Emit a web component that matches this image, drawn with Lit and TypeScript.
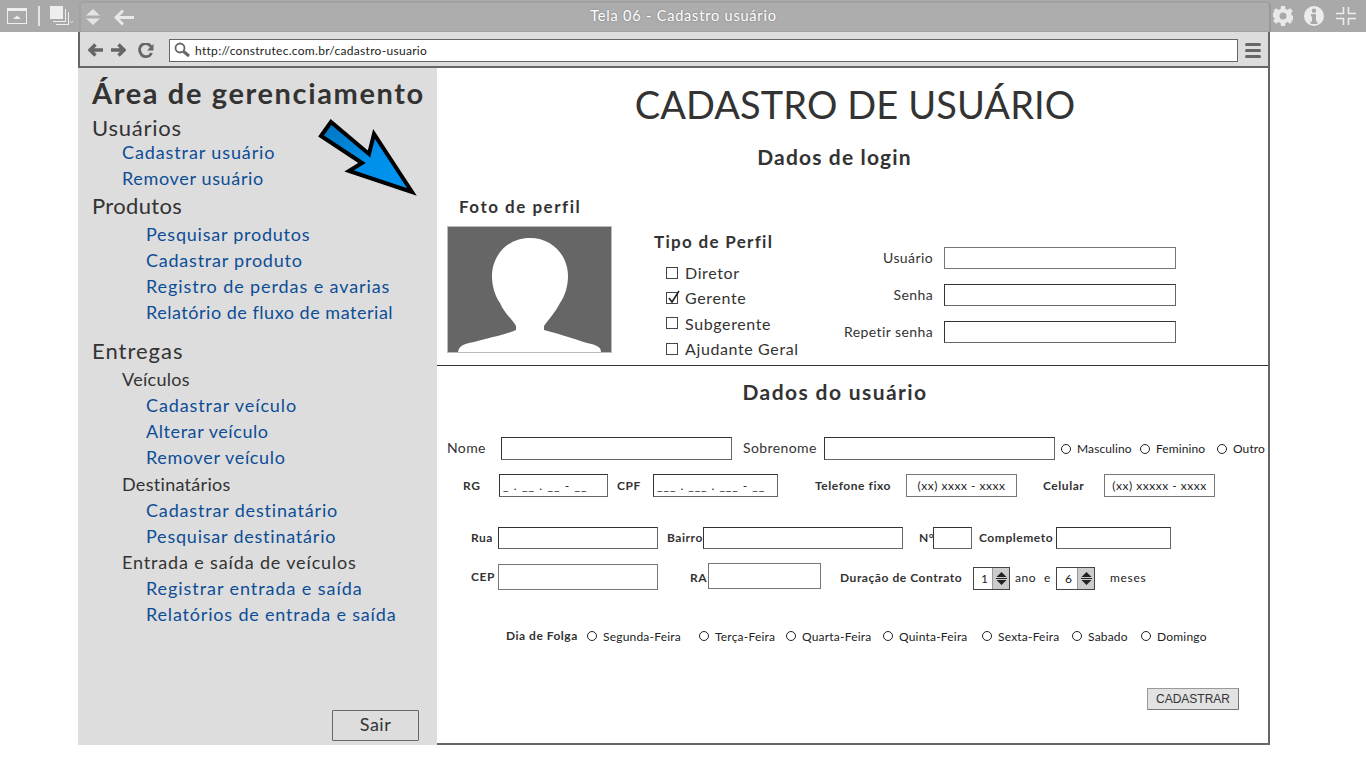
import { LitElement, html, css } from "lit";
import { customElement } from "lit/decorators.js";

type Nav = { t: string; k: string; y: number; ls: number };
const NAV: Nav[] = [
  { t: "Usuários", k: "group", y: 128, ls: 0.75 },
  { t: "Cadastrar usuário", k: "link l1", y: 152, ls: 0.89 },
  { t: "Remover usuário", k: "link l1", y: 178, ls: 0.65 },
  { t: "Produtos", k: "group", y: 206, ls: 0.35 },
  { t: "Pesquisar produtos", k: "link l2", y: 234, ls: 0.76 },
  { t: "Cadastrar produto", k: "link l2", y: 260, ls: 0.77 },
  { t: "Registro de perdas e avarias", k: "link l2", y: 286, ls: 0.9 },
  { t: "Relatório de fluxo de material", k: "link l2", y: 312, ls: 0.52 },
  { t: "Entregas", k: "group", y: 351, ls: 1.0 },
  { t: "Veículos", k: "sub", y: 379, ls: 0.3 },
  { t: "Cadastrar veículo", k: "link l2", y: 405, ls: 0.89 },
  { t: "Alterar veículo", k: "link l2", y: 431, ls: 0.58 },
  { t: "Remover veículo", k: "link l2", y: 457, ls: 0.65 },
  { t: "Destinatários", k: "sub", y: 484, ls: 0.3 },
  { t: "Cadastrar destinatário", k: "link l2", y: 510, ls: 0.83 },
  { t: "Pesquisar destinatário", k: "link l2", y: 536, ls: 0.78 },
  { t: "Entrada e saída de veículos", k: "sub", y: 562, ls: 0.85 },
  { t: "Registrar entrada e saída", k: "link l2", y: 588, ls: 0.93 },
  { t: "Relatórios de entrada e saída", k: "link l2", y: 614, ls: 0.82 },
];

const DAYS = ["Segunda-Feira", "Terça-Feira", "Quarta-Feira", "Quinta-Feira", "Sexta-Feira", "Sabado", "Domingo"];

@customElement("app-root")
export class AppRoot extends LitElement {
  static styles = css`
    :host { display: block; width: 1366px; height: 768px; background: #fff; overflow: hidden; font-family: "Lato", "Open Sans", sans-serif; color: #333; position: relative; }
    * { box-sizing: border-box; }
    svg { display: block; flex: none; }
    .top { display: flex; height: 32px; background: #a9a9a9; }
    .side { width: 79px; display: flex; align-items: center; flex: none; }
    .s1 { margin-left: 7px; }
    .sep { width: 2px; height: 20px; background: #e4e4e4; margin: 0 10px 0 11px; }
    .title { width: 1192px; flex: none; height: 31px; margin-top: 1px; background: #adadad; border: 2px solid #a2a2a2; border-bottom-width: 1px; border-right-color: #999; border-radius: 5px 5px 0 0; display: flex; align-items: center; position: relative; }
    .bk { margin-left: 13px; }
    .ud { margin-left: 4px; }
    .tt { position: absolute; left: 17px; right: 0; top: 4px; text-align: center; color: #fff; font-size: 14.5px; letter-spacing: 0.8px; text-shadow: 0 0 2px #777; }
    .right { display: flex; align-items: center; gap: 11px; margin-left: 2px; }
    .shrink { margin-left: 1px; }
    .browser { width: 1192px; margin-left: 78px; border-left: 2px solid #666; border-right: 2px solid #666; }
    .chrome { height: 36px; background: #ddd; border-bottom: 2px solid #666; display: flex; align-items: center; padding-left: 8px; padding-top: 2px; }
    .nav2 { margin-left: 8px; }
    .nav3 { margin-left: 12px; }
    .addr { width: 1069px; height: 23px; margin-left: 15px; background: #fff; border: 1px solid #666; display: flex; align-items: center; padding-left: 4px; font-size: 12px; letter-spacing: 0.3px; color: #222; }
    .addr span { margin-left: 5px; }
    .burger { margin-left: 7px; }
    .page { margin-left: -2px; margin-right: -2px; height: 677px; display: flex; }
    .menu { width: 359px; flex: none; background: #ddd; position: relative; padding-left: 14px; display: flex; flex-direction: column; }
    .menu h1 { margin: 12px 0 0; height: 28px; line-height: 26px; font-size: 29px; font-weight: 700; letter-spacing: 1.62px; white-space: nowrap; }
    .row { height: 26px; line-height: 26px; white-space: nowrap; }
    .group { font-size: 22px; }
    .sub { font-size: 18px; padding-left: 30px; }
    .link { font-size: 18px; color: #0d4d96; }
    .l1 { padding-left: 30px; }
    .l2 { padding-left: 54px; }
    .arrow { position: absolute; left: 239px; top: 48px; overflow: visible; }
    .sair { position: absolute; left: 254px; top: 642px; width: 87px; height: 31px; padding-bottom: 3px; background: #ddd; border: 1px solid #666; display: flex; align-items: center; justify-content: center; font-size: 18px; letter-spacing: 0.5px; border-radius: 1px; }
    .main { width: 833px; flex: none; height: 677px; border-right: 2px solid #666; border-bottom: 2px solid #666; border-radius: 0 0 3px 0; }
    .login { height: 298px; border-bottom: 1px solid #333; display: flow-root; }
    .h0 { margin: 13px 0 0; height: 46px; line-height: 46px; padding-left: 5px; text-align: center; font-size: 38px; font-weight: 400; letter-spacing: 0.1px; }
    .h2 { margin: 0; height: 26px; line-height: 26px; text-align: center; font-size: 21px; font-weight: 700; letter-spacing: 1.15px; padding-right: 36px; }
    .login .h2 { margin-top: 18px; margin-bottom: 0; position: relative; top: -1px; }
    .lg { display: grid; grid-template-columns: 207px 203px 1fr; padding-left: 10px; }
    .cap { font-size: 17px; font-weight: 700; letter-spacing: 1.3px; line-height: 24px; height: 24px; white-space: nowrap; }
    .foto .cap { margin-top: 24px; padding-left: 12px; letter-spacing: 1.5px; }
    .avatar { margin-top: 7px; }
    .tipo .cap { margin-top: 59px; }
    .checks { margin-top: 6px; display: flex; flex-direction: column; padding-left: 12px; }
    .check { height: 25.3px; display: flex; align-items: center; gap: 7px; font-size: 16px; letter-spacing: 0.62px; }
    .box { width: 12px; height: 12px; border: 1px solid #444; background: #fff; flex: none; position: relative; }
    .box svg { position: absolute; left: 0; top: -3px; }
    .creds { margin-top: 76px; display: grid; grid-template-columns: 76px 232px; row-gap: 15px; column-gap: 11px; align-items: center; align-content: start; }
    .creds label { text-align: right; font-size: 14px; letter-spacing: 0.4px; white-space: nowrap; justify-self: end; padding-bottom: 2px; }
    .inp { height: 100%; min-height: 22px; background: #fff; border: 1px solid #333; border-right-color: #666; border-bottom-color: #666; display: flex; align-items: center; font-size: 12px; letter-spacing: 0.5px; color: #222; white-space: nowrap; }
    .inp.c { justify-content: center; }
    .inp.lite { border-color: #777; }
    .mask { padding-left: 3px; }
    .mrg { letter-spacing: 1.1px; }
    .mcpf { letter-spacing: 0.95px; }
    .user { padding-left: 10px; }
    .user .h2 { margin-top: 13px; padding-right: 45px; letter-spacing: 1.4px; }
    .fr { display: grid; align-items: center; height: 23px; white-space: nowrap; }
    .fr label { font-size: 12px; font-weight: 700; letter-spacing: 0.55px; padding-bottom: 1px; }
    .fr label.plain { font-size: 14px; font-weight: 400; letter-spacing: 0.4px; padding-bottom: 2px; }
    .r1 { margin-top: 32px; grid-template-columns: 54px 231px 92px 231px 85px 77px 1fr; }
    .r1 label.sobre { padding-left: 11px; }
    .r2 { margin-top: 14px; grid-template-columns: 52px 109px 45px 125px 128px 111px 87px 111px; }
    .r3 { margin-top: 30px; height: 22px; grid-template-columns: 51px 160px 45px 200px 30px 39px 84px 115px; }
    .r4 { margin-top: 15px; height: 22px; grid-template-columns: 51px 160px 50px 113px 152px 37px 46px 39px 1fr; }
    .r4 .up { margin-top: -2px; }
    .r4 .low { margin-top: 2px; }
    .p16 { padding-left: 16px; } .p9 { padding-left: 9px; } .p37 { padding-left: 37px; } .p26 { padding-left: 26px; }
    .p24 { padding-left: 24px; } .p7 { padding-left: 7px; } .p32 { padding-left: 32px; } .p19 { padding-left: 19px; }
    .radio { display: flex; align-items: center; gap: 6px; font-size: 12px; letter-spacing: 0.1px; white-space: nowrap; color: #222; }
    .radio i { width: 10px; height: 10px; border: 1px solid #222; border-radius: 50%; flex: none; }
    .first { padding-left: 6px; }
    .plainT { font-size: 12px; letter-spacing: 0.5px; color: #222; display: flex; margin-top: 1px; }
    .ano { padding-left: 5px; gap: 8px; }
    .mes { padding-left: 15px; letter-spacing: .7px; }
    .step { height: 23px; margin-top: 3px; align-self: start; display: flex; background: #fff; border: 1px solid #444; font-size: 12px; color: #222; }
    .step b { flex: 1; padding-left: 3px; font-weight: 400; display: flex; align-items: center; justify-content: center; }
    .step span { width: 17px; background: #ccc; display: flex; align-items: center; justify-content: center; border-left: 1px solid #999; }
    .days { margin-top: 40px; height: 20px; display: grid; grid-template-columns: 140px 112px 87px 97px 99px 90px 69px 1fr; align-items: center; }
    .days label { padding-left: 59px; font-size: 12px; font-weight: 700; letter-spacing: 0.5px; white-space: nowrap; margin-right: -40px; padding-bottom: 1px; }
    .days .radio { gap: 6px; letter-spacing: .2px; }
    .cad { margin: 42px 0 0 700px; width: 92px; height: 22px; background: #e2e2e2; border: 1px solid #999; border-bottom-color: #777; border-right-color: #777; border-radius: 1px; display: flex; align-items: center; justify-content: center; font-size: 12px; letter-spacing: 0; font-family: "Liberation Sans", sans-serif; color: #333; }
  `;

  private arrowSvg() {
    return html`<svg class="arrow" width="104" height="80" viewBox="239 48 104 80">
      <defs><linearGradient id="ag" x1="0" y1="0" x2="1" y2="1"><stop offset="0" stop-color="#0273bd"/><stop offset=".55" stop-color="#0090ea"/><stop offset="1" stop-color="#0094f2"/></linearGradient></defs>
      <polygon points="253,54 243,68 284,95 271,103 334,124 296,66 291,86" fill="url(#ag)" stroke="#000" stroke-width="4"/>
    </svg>`;
  }

  private check(t: string, on = false) {
    return html`<div class="check"><span class="box">${on ? html`<svg width="14" height="15" viewBox="0 0 14 15"><path d="M2 8l3 4 7-11" fill="none" stroke="#222" stroke-width="1.6"/></svg>` : ""}</span>${t}</div>`;
  }
  private radio(t: string, cls = "") {
    return html`<div class="radio ${cls}"><i></i>${t}</div>`;
  }
  private tri() {
    return html`<svg width="13" height="17" viewBox="0 0 13 17"><path d="M6.500 2L11.500 7H1.500zM6.500 15L11.500 10H1.500z" fill="#222"/><rect x="1" y="8" width="11" height="1" fill="#222"/></svg>`;
  }

  render() {
    return html`
      <div class="top">
        <div class="side">
          <svg class="s1" width="20" height="16" viewBox="0 0 20 16"><rect x=".5" y=".5" width="19" height="15" fill="none" stroke="#eee"/><rect width="20" height="3" fill="#eee"/><path d="M6 11l4-3.500 4 3.500z" fill="#eee"/></svg>
          <span class="sep"></span>
          <svg width="24" height="20" viewBox="0 0 24 20"><rect width="13" height="13" fill="#eee"/><path d="M15 3h1v13H3v-1h12z M18 6h1v13H6v-1h12z" fill="#eee"/><path d="M20 15l1.500 1.500L23 15" fill="none" stroke="#eee" stroke-width=".8"/></svg>
        </div>
        <div class="title">
          <svg class="ud" width="16" height="18" viewBox="0 0 16 18"><path d="M8 1l7 6.500H1zM8 17l7-6.500H1z" fill="#e4e4e4"/></svg>
          <svg class="bk" width="20" height="17" viewBox="0 0 20 17"><path d="M9 1.500L2 8.500l7 7M2.500 8.500H20" fill="none" stroke="#e8e8e8" stroke-width="3"/></svg>
          <div class="tt">Tela 06 - Cadastro usuário</div>
        </div>
        <div class="right">
          <svg width="20" height="20" viewBox="0 0 20 20"><path fill="#e8e8e8" fill-rule="evenodd" d="M8 0h4l.5 3 2 .9L17 2.200 19.800 5l-1.700 2.500.9 2 1 .5v4l-1 .5-.9 1L19.800 15 17 17.800l-2.500-1.700-2 .9-.5 3H8l-.5-3-2-.9L3 17.800.2 15l1.700-2.500-.9-1-1-.5V7l1-.5.9-1L.2 5 3 2.200l2.500 1.700 2-.9zM10 6.500a3.500 3.500 0 100 7 3.500 3.500 0 000-7z"/></svg>
          <svg width="20" height="20" viewBox="0 0 20 20"><circle cx="10" cy="10" r="10" fill="#ececec"/><circle cx="10" cy="4.700" r="2.200" fill="#a9a9a9"/><path d="M7 8h5v7.500h1.500V18h-7v-2.500H8V10.500H7z" fill="#a9a9a9"/></svg>
          <svg class="shrink" width="20" height="18" viewBox="0 0 20 18"><path d="M7.500 0v6.500H0M12.500 0v6.500H20M7.500 18v-6.500H0M12.500 18v-6.500H20" fill="none" stroke="#eee" stroke-width="1.600"/></svg>
        </div>
      </div>
      <div class="browser">
        <div class="chrome">
          <svg width="15" height="14" viewBox="0 0 15 14"><path d="M7.500 1.500L2 7l5.500 5.500M3 7h12" fill="none" stroke="#666" stroke-width="3.400"/></svg>
          <svg class="nav2" width="15" height="14" viewBox="0 0 15 14"><path d="M7.500 1.500L13 7l-5.500 5.500M12 7H0" fill="none" stroke="#666" stroke-width="3.400"/></svg>
          <svg class="nav3" width="16" height="15" viewBox="0 0 16 15"><path d="M13 3.800A6 6 0 102.300 9.500 6 6 0 0013.500 10" fill="none" stroke="#666" stroke-width="2.800"/><path d="M15.500 1v6.500h-6.500z" fill="#666"/></svg>
          <div class="addr">
            <svg width="16" height="16" viewBox="0 0 16 16"><circle cx="6" cy="6" r="4.500" fill="none" stroke="#666" stroke-width="1.800"/><path d="M9.500 9.500L15 14" stroke="#666" stroke-width="3"/></svg>
            <span>http://construtec.com.br/cadastro-usuario</span>
          </div>
          <svg class="burger" width="16" height="15" viewBox="0 0 16 15"><g fill="#666"><rect width="16" height="3" rx="1.500"/><rect y="6" width="16" height="3" rx="1.500"/><rect y="12" width="16" height="3" rx="1.500"/></g></svg>
        </div>
        <div class="page">
          <div class="menu">
            <h1>Área de gerenciamento</h1>
            ${NAV.map((n, i) => {
              const mt = i === 0 ? 7 : n.y - NAV[i - 1].y - 26;
              return html`<div class="row ${n.k}" style="margin-top:${mt}px;letter-spacing:${n.ls}px">${n.t}</div>`;
            })}
            ${this.arrowSvg()}
            <div class="sair">Sair</div>
          </div>
          <div class="main">
            <section class="login">
              <h2 class="h0">CADASTRO DE USUÁRIO</h2>
              <h3 class="h2">Dados de login</h3>
              <div class="lg">
                <div class="foto">
                  <div class="cap">Foto de perfil</div>
                  <svg class="avatar" width="165" height="127" viewBox="0 0 165 127">
                    <rect width="165" height="127" fill="#666"/>
                    <rect x=".5" y=".5" width="164" height="126" fill="none" stroke="#bbb"/>
                    <path fill="#fff" d="M83 12C60 12 45 30 45 50C45 60 48 70 53 77C57 87 66 94 69 100L69 104C60 108 42 112 27 116C16 118 12 120 11 126L154 126C154 121 150 119 140 117C125 112 108 107 97 104L97 100C101 94 108 87 113 77C118 70 121 60 121 50C121 30 106 12 83 12Z"/>
                  </svg>
                </div>
                <div class="tipo">
                  <div class="cap">Tipo de Perfil</div>
                  <div class="checks">
                    ${this.check("Diretor")}${this.check("Gerente", true)}${this.check("Subgerente")}${this.check("Ajudante Geral")}
                  </div>
                </div>
                <div class="creds">
                  <label>Usuário</label><div class="inp lite"></div>
                  <label>Senha</label><div class="inp"></div>
                  <label>Repetir senha</label><div class="inp"></div>
                </div>
              </div>
            </section>
            <section class="user">
              <h3 class="h2">Dados do usuário</h3>
              <div class="fr r1">
                <label class="plain">Nome</label><div class="inp"></div>
                <label class="plain sobre">Sobrenome</label><div class="inp"></div>
                ${this.radio("Masculino", "first")}${this.radio("Feminino")}${this.radio("Outro")}
              </div>
              <div class="fr r2">
                <label class="p16">RG</label><div class="inp mask mrg">_ . __ . __ - __</div>
                <label class="p9">CPF</label><div class="inp mask mcpf">___ . ___ . ___ - __</div>
                <label class="p37">Telefone fixo</label><div class="inp lite c">(xx) xxxx - xxxx</div>
                <label class="p26">Celular</label><div class="inp lite c">(xx) xxxxx - xxxx</div>
              </div>
              <div class="fr r3">
                <label class="p24">Rua</label><div class="inp"></div>
                <label class="p9">Bairro</label><div class="inp"></div>
                <label class="p16">N°</label><div class="inp"></div>
                <label class="p7">Complemeto</label><div class="inp"></div>
              </div>
              <div class="fr r4">
                <label class="p24">CEP</label><div class="inp lite"></div>
                <label class="p32 low">RA</label><div class="inp lite up"></div>
                <label class="p19 low">Duração de Contrato</label>
                <div class="step"><b>1</b><span>${this.tri()}</span></div>
                <div class="plainT ano"><span>ano</span><span>e</span></div>
                <div class="step"><b>6</b><span>${this.tri()}</span></div>
                <div class="plainT mes">meses</div>
              </div>
              <div class="days">
                <label>Dia de Folga</label>
                ${DAYS.map((d) => this.radio(d))}
              </div>
              <div class="cad">CADASTRAR</div>
            </section>
          </div>
        </div>
      </div>
    `;
  }
}
